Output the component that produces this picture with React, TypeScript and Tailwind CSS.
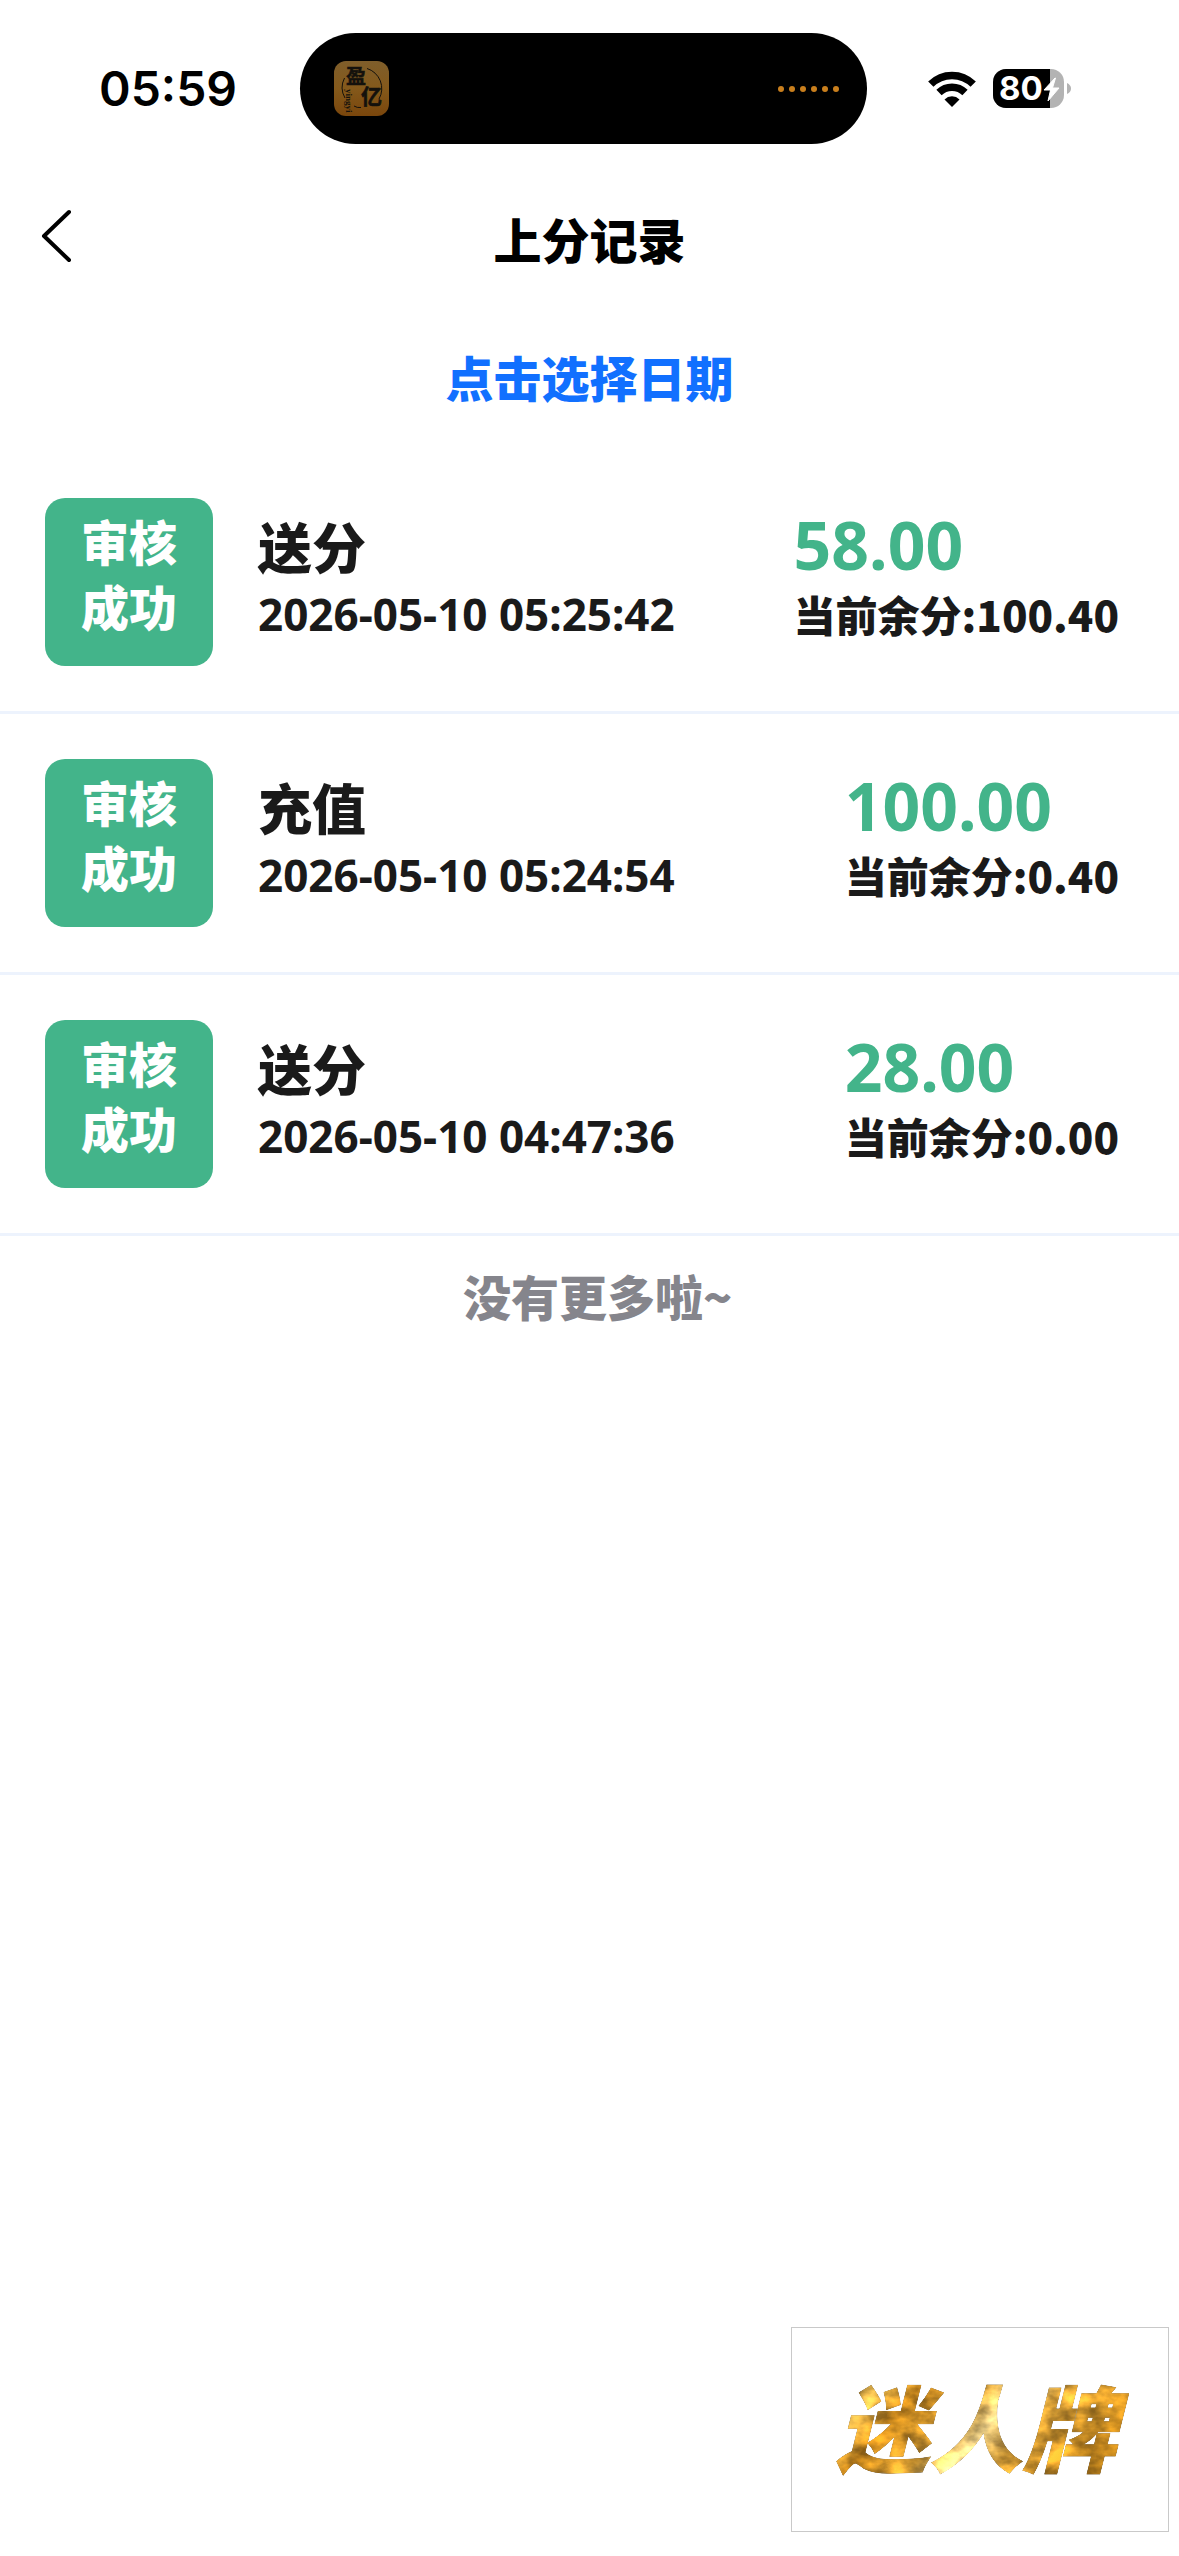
type ScoreRecord = {
  id: number
  type: string
  time: string
  amount: string
  balance: string
}

const records: ScoreRecord[] = [
  { id: 1, type: '送分', time: '2026-05-10 05:25:42', amount: '58.00', balance: '100.40' },
  { id: 2, type: '充值', time: '2026-05-10 05:24:54', amount: '100.00', balance: '0.40' },
  { id: 3, type: '送分', time: '2026-05-10 04:47:36', amount: '28.00', balance: '0.00' },
]

const loadingDots = [0, 1, 2, 3, 4, 5]

function AppBadge() {
  return (
    <svg viewBox="0 0 55 55" className="size-[55px]" role="img" aria-label="盈亿">
      <defs>
        <linearGradient id="badge" x1="0" y1="0" x2="0" y2="1">
          <stop offset="0" stopColor="#7f5e2b" />
          <stop offset="0.5" stopColor="#84591b" />
          <stop offset="1" stopColor="#7a460c" />
        </linearGradient>
      </defs>
      <rect width="55" height="55" rx="12" fill="url(#badge)" />
      <path d="M33 7.500A21 21 0 0 1 45 38" fill="none" stroke="#14110c" strokeWidth="1" />
      <path d="M10.500 17A21 21 0 0 0 11 37" fill="none" stroke="#14110c" strokeWidth="1" />
      <path d="M20 45q3 2 7 1.500" fill="none" stroke="#14110c" strokeWidth="1" />
      <g fill="#14110c" stroke="#14110c" strokeWidth="0.600" className="font-['Noto_Sans_CJK_SC',sans-serif] font-bold">
        <text x="12" y="23" fontSize="20">盈</text>
        <text x="27" y="43" fontSize="21">亿</text>
      </g>
      <text
        transform="translate(12 28) rotate(90)"
        fontSize="9"
        fill="#14110c"
        className="font-['Liberation_Serif',serif] font-bold"
      >
        yingyi
      </text>
    </svg>
  )
}

function WifiIcon() {
  return (
    <svg viewBox="0 0 48 36" className="h-9 w-12" aria-hidden="true">
      <g fill="none" stroke="#000" strokeWidth="7.500">
        <path d="M2.800 13.200A30 30 0 0 1 45.200 13.200" />
        <path d="M11 21.500A18.500 18.500 0 0 1 37 21.500" />
      </g>
      <path d="M24 36l-7.500-7.600a10.800 10.800 0 0 1 15 0z" fill="#000" />
    </svg>
  )
}

function BatteryIcon() {
  return (
    <svg viewBox="0 0 79 39" className="h-[39px] w-[79px]" role="img" aria-label="80%">
      <defs>
        <clipPath id="cell">
          <rect width="71" height="39" rx="13" />
        </clipPath>
      </defs>
      <g clipPath="url(#cell)">
        <rect width="71" height="39" fill="#b3b3b3" />
        <rect width="57" height="39" fill="#000" />
      </g>
      <path d="M74 14q4 2 4 5.500t-4 5.500z" fill="#b3b3b3" />
      <text x="6" y="31" fontSize="33" fill="#fff" className="font-[Inter,sans-serif] font-bold">80</text>
      <path d="M62 9L51 21h6.500L55 32l11-13h-6.500l3-10z" fill="#fff" stroke="#fff" strokeWidth="1" strokeLinejoin="round" />
    </svg>
  )
}

function StatusBar() {
  return (
    <div className="grid grid-cols-[300fr_567fr_312fr] items-center pt-[33px]">
      <time className="pl-9 text-center font-[Inter,sans-serif] text-5xl font-semibold">05:59</time>
      <div className="flex h-[111px] items-center justify-between rounded-full bg-black pr-7 pl-[34px]">
        <AppBadge />
        <div className="flex gap-[5px]">
          {loadingDots.map(dot => (
            <span key={dot} className="size-1.5 rounded-full bg-[#c97f1d]" />
          ))}
        </div>
      </div>
      <div className="flex items-center gap-[17px] pl-[61px]">
        <WifiIcon />
        <BatteryIcon />
      </div>
    </div>
  )
}

function RecordRow({ record }: { record: ScoreRecord }) {
  return (
    <li className="flex items-start border-b-3 border-[#edf3fd] py-[45px] pr-[60px] pl-[45px]">
      <div className="size-[168px] rounded-[20px] bg-[#43b48a] px-9 pt-2.5 text-center text-5xl leading-[65px] text-white">
        审核成功
      </div>
      <div className="ml-[45px] flex-1">
        <h2 className="pt-2 text-[54px] leading-[80px]">{record.type}</h2>
        <p className="font-['Noto_Sans',sans-serif] text-[44px] leading-[56px] font-bold">{record.time}</p>
      </div>
      <div>
        <p className="pt-1 font-['Noto_Sans',sans-serif] text-[66px] leading-[84px] font-bold text-[#43b48a]">{record.amount}</p>
        <p className="text-[42px] leading-[56px]">当前余分:{record.balance}</p>
      </div>
    </li>
  )
}

function FloatingLogo() {
  return (
    <button
      type="button"
      aria-label="迷人牌"
      className="fixed right-2.5 bottom-6 flex h-[205px] w-[378px] items-center justify-center border border-[#c9c9c9] bg-white"
    >
      <svg viewBox="0 0 378 205" className="w-full">
        <defs>
          <linearGradient id="gold" x1="0" y1="0" x2="1" y2="0.400">
            <stop offset="0" stopColor="#b87e1c" />
            <stop offset="0.200" stopColor="#e8b850" />
            <stop offset="0.320" stopColor="#c4841c" />
            <stop offset="0.500" stopColor="#dba034" />
            <stop offset="0.620" stopColor="#f0d288" />
            <stop offset="0.750" stopColor="#dca238" />
            <stop offset="1" stopColor="#b47c1c" />
          </linearGradient>
          <filter id="foil" x="0" y="0" width="1" height="1" colorInterpolationFilters="sRGB">
            <feTurbulence type="fractalNoise" baseFrequency="0.035 0.050" numOctaves="4" seed="8" result="noise" />
            <feColorMatrix
              in="noise"
              values="1.800 0 0 0 -0.450  1.800 0 0 0 -0.450  1.800 0 0 0 -0.450  0 0 0 0 1"
              result="grain"
            />
            <feComposite in="SourceGraphic" in2="grain" operator="arithmetic" k1="0.8" k2="0.7" k3="0" k4="0" result="mix" />
            <feComposite in="mix" in2="SourceGraphic" operator="in" />
          </filter>
        </defs>
        <text
          x="185"
          y="138"
          textAnchor="middle"
          fontSize="94"
          fill="url(#gold)"
          stroke="url(#gold)"
          strokeWidth="1"
          filter="url(#foil)"
          className="font-['Noto_Sans_CJK_SC',sans-serif] font-black italic"
        >
          迷人牌
        </text>
      </svg>
    </button>
  )
}

export default function App() {
  return (
    <div className="min-h-screen bg-white font-['Noto_Sans_CJK_SC',sans-serif] font-black text-[#1a1a1a]">
      <header className="text-black">
        <StatusBar />
        <div className="grid h-[138px] grid-cols-[1fr_auto_1fr] items-center pt-[50px]">
          <button type="button" aria-label="返回" className="ml-10 w-8">
            <svg viewBox="0 0 32 54" className="-mt-1 h-[54px] w-8" fill="none" stroke="currentColor" strokeWidth="4" strokeLinecap="round" strokeLinejoin="round">
              <path d="M29 3L4 27l25 24" />
            </svg>
          </button>
          <h1 className="text-5xl">上分记录</h1>
        </div>
      </header>

      <main>
        <div className="flex h-[171px] items-center justify-center pt-4">
          <button type="button" className="text-5xl leading-[70px] text-[#1170ff]">点击选择日期</button>
        </div>
        <ul>
          {records.map(record => (
            <RecordRow key={record.id} record={record} />
          ))}
        </ul>
        <p className="pt-6 pl-4 text-center text-5xl leading-[70px] text-[#85858c]">没有更多啦~</p>
      </main>

      <FloatingLogo />
    </div>
  )
}
